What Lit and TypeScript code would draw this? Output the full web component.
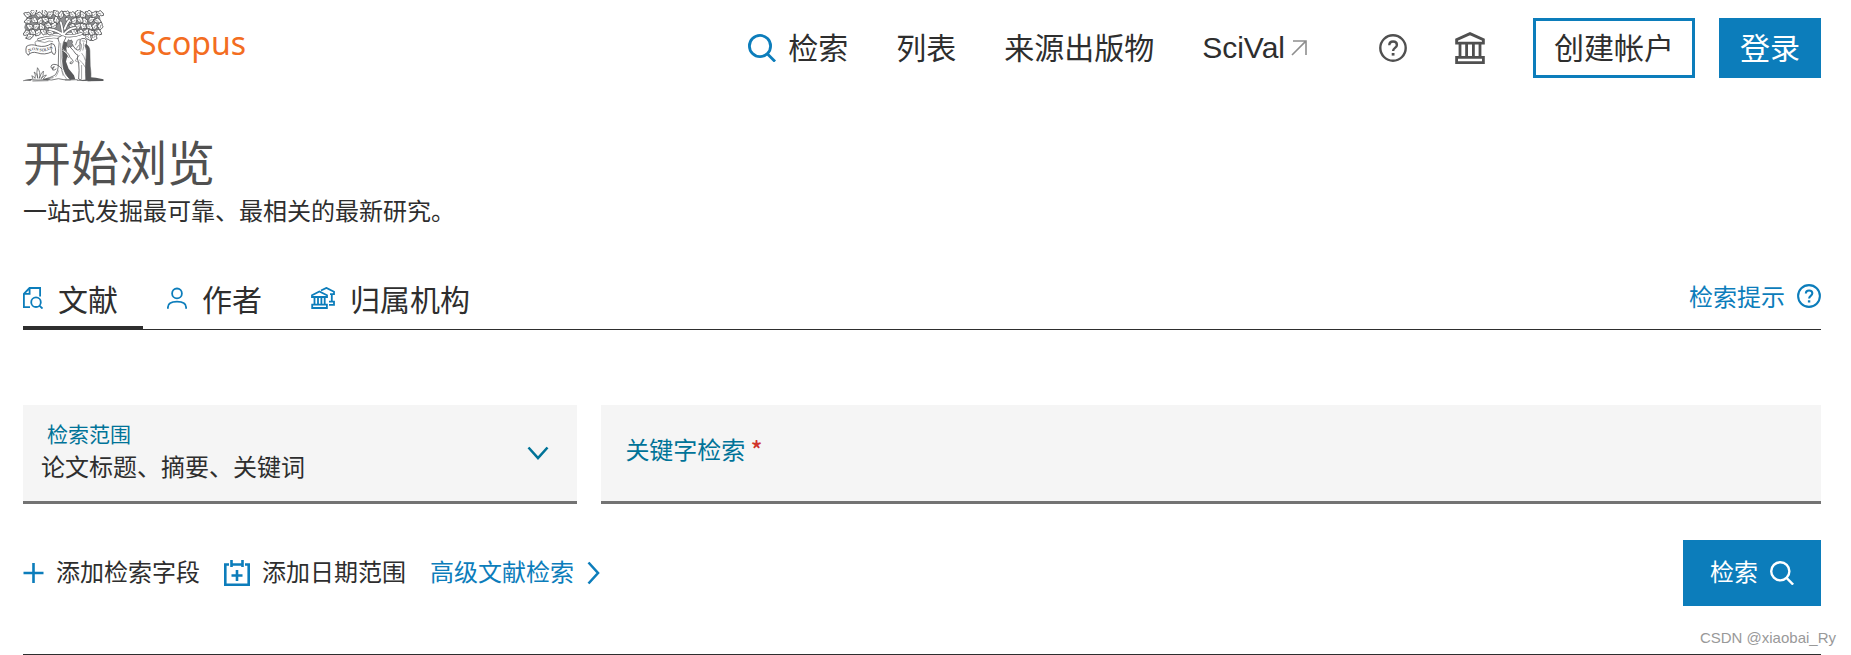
import { LitElement, html, svg, css } from "lit";
import { customElement, state } from "lit/decorators.js";

// x, y, rotation of each leaf in the crown of the emblem
const LEAVES: number[][] = [
  [83, 43, 200], [100, 37, 320], [117, 44, 20], [134, 38, 250], [150, 43, 330], [167, 39, 60],
  [184, 44, 280], [201, 39, 200], [217, 43, 30], [234, 39, 300], [250, 44, 240],
  [267, 39, 20], [284, 43, 310], [300, 40, 20], [84, 61, 160], [102, 60, 30],
  [120, 63, 300], [137, 58, 200], [154, 62, 40], [170, 60, 260], [206, 60, 220],
  [223, 62, 310], [240, 59, 30], [257, 63, 240], [274, 59, 340], [292, 62, 20],
  [90, 79, 210], [108, 80, 330], [126, 80, 240], [144, 76, 20], [162, 77, 300],
  [217, 78, 20], [234, 79, 320], [251, 78, 220], [268, 79, 40], [285, 79, 290], [302, 78, 280],
  [80, 97, 150], [97, 96, 30], [114, 98, 310], [132, 95, 210], [150, 97, 10],
  [224, 95, 210], [242, 96, 20], [259, 96, 310], [276, 97, 220], [294, 96, 30],
  [88, 110, 340], [265, 111, 50], [283, 111, 130],
];

const emblem = html`
  <svg class="emblem" viewBox="69 29 243 217" role="img" aria-label="Elsevier">
    <g fill="none" stroke="#58595b" stroke-linecap="round" stroke-linejoin="round">
      <path fill="#8e8f91" stroke="none" d="M80 42l18-4 30 3 30-3 32 3 32-3 28 3 30-3 20 5 2 16-4 16 4 14-10 16-12 3-28-3-28-8-36 4-26 0-34-6-28 4-22-2-6-16 6-18z"/>
      ${LEAVES.map(([x, y, r]) => svg`
        <g transform="translate(${x} ${y}) rotate(${r})">
          <path fill="#fff" stroke-width="2.6" d="M-11 0q3-5 6-4q0-6 5-5q3 1 4 3q5-1 9 6q-6 6-9 4q-2 5-6 3q-3 0-4-3q-3 0-5-4z"/>
          <path stroke-width="1.6" d="M-5 0L3 0"/>
        </g>`)}
      <g stroke-width="9">
        <path d="M188 118Q190 90 182 66M190 106Q174 90 148 87M192 102Q206 84 226 82M183 112Q150 106 116 118M194 106Q220 110 244 100M194 86Q200 68 208 60"/>
      </g>
      <g stroke="#fff" stroke-width="5.5">
        <path d="M188 118Q190 90 182 66M190 106Q174 90 148 87M192 102Q206 84 226 82M183 112Q150 106 116 118M194 106Q220 110 244 100M194 86Q200 68 208 60"/>
      </g>
      <path fill="#58595b" stroke="none" d="M188 122L203 128 199 146 203 165 198 184 206 206 222 226 226 238 204 240 188 214Z"/>
      <path fill="#fff" stroke-width="2.4" d="M174 114Q180 126 176 145L175 186Q176 214 164 226Q150 234 130 238Q157 243 175 236Q190 240 212 240Q195 225 190 204Q184 170 187 144Q188 126 198 112Q186 100 174 114Z"/>
      <path fill="#fff" stroke="none" d="M177 114Q188 104 196 112L188 120z"/>
      <path stroke-width="1.4" d="M182 130l0 52q1 28 7 44M176 212q-4 12-9 18M186 212q4 14 13 24"/>
      <path stroke-width="2.6" d="M186 207Q178 197 170 194Q160 191 155 195Q150 201 155 205Q163 206 162 199Q155 203 158 210Q164 211 168 207"/>
      <path stroke="#fff" stroke-width="5" d="M190 150Q204 157 208 172"/>
      <path stroke-width="2.4" d="M187 148Q206 155 210 172Q218 177 220 185Q216 195 210 190Q209 184 215 185M187 153Q200 159 205 172"/>

      <path fill="#fff" stroke-width="2.6" d="M80 138Q92 130 112 137Q136 143 154 130Q164 130 166 142Q169 157 164 163Q158 164 155 155Q134 166 111 158Q94 153 84 165Q75 158 77 148Z"/>
      <path stroke-width="1.8" d="M84 165Q92 163 86 153M154 130Q150 142 155 155M108 136Q100 124 111 122L134 127Q148 119 158 124"/>
      <path id="motto" stroke="none" d="M87 156Q100 147 116 153Q136 157 160 144"/>
      <text fill="#58595b" stroke="none" font-family="Liberation Serif, serif" font-weight="700" font-size="13"><textPath href="#motto">NON SOLUS</textPath></text>

      <path fill="#58595b" stroke-width="1.5" d="M255 130Q270 137 270 152L271 198Q275 226 272 240L248 242 256 200Z"/>
      <path fill="#fff" stroke-width="2.6" d="M240 128Q238 117 246 115Q257 112 260 121Q262 130 256 136Q262 148 259 171Q256 196 258 240Q248 244 236 237Q239 210 236 187Q230 177 234 165Q228 165 220 151L207 137L211 130Q219 134 227 147Q234 153 239 148Z"/>
      <path stroke-width="1.6" d="M240 128q6 2 5 10q-1 10-5 16M247 122l8 1M251 128q3 10-2 22M246 160q7 8 10 20M239 180q9 6 19 24M245 196v40M238 166q-8 8-12 16l12 6"/>
      <path fill="#8e8f91" stroke-width="2" d="M202 124l4-6 4 4 4-3 4 6-2 6 4 4-5 5-6-1-4 4-4-7z"/>
      <path stroke-width="2" d="M227 134l5-14 8-3M229 145l7-9"/>

      <path stroke-width="2.2" d="M105 235Q108 224 102 216Q113 220 113 235Q108 216 112 203Q122 215 118 235Q122 219 130 213Q131 228 123 236Q133 224 139 225L130 236M98 236l-3-9 9 6"/>
      <path stroke-width="2.2" d="M70 242l26-3 18 1 34-2M98 243l46-1M140 236l19-3M196 240l36-1M232 241l39 1"/>
      <path fill="#58595b" stroke="none" d="M264 231l24 2 23 5 0 5-48 1zM72 240l25-4-6 6z"/>
    </g>
  </svg>`;

const searchIcon = html`
  <svg class="icon-search" viewBox="0 0 28 28" aria-hidden="true">
    <circle cx="12" cy="12" r="10.6"/><path d="M19 19.5l8 8"/>
  </svg>`;

const helpIcon = html`
  <svg class="icon-help" viewBox="0 0 28 28" aria-hidden="true">
    <circle cx="14" cy="14" r="12.7"/>
    <path d="M10.3 11.2c0-2.2 1.5-3.7 3.8-3.7s3.8 1.4 3.8 3.4c0 3-3.8 3-3.8 6"/>
    <path d="M12.7 19h2.8v2.6h-2.8z" class="solid"/>
  </svg>`;

@customElement("app-root")
export class AppRoot extends LitElement {
  @state() private tab = "文献";

  static styles = css`
    :host {
      display: block;
      position: relative;
      color: #2e2e2e;
      background: #fff;
      font-family: "Noto Sans CJK SC", sans-serif;
      font-size: 24px;
      line-height: 36px;
    }
    * { box-sizing: border-box; }
    a { color: inherit; text-decoration: none; }
    button {
      font: inherit;
      color: inherit;
      background: none;
      border: 0;
      padding: 0;
      cursor: pointer;
    }
    svg { display: block; flex: none; fill: none; stroke: currentColor; }
    .solid { fill: currentColor; stroke: none; }
    .page { padding: 10px 30px 0 23px; }
    .text { padding-bottom: 4px; }

    .header { display: flex; align-items: center; min-height: 76px; font-size: 30px; line-height: 40px; }
    .brand { display: flex; align-items: flex-start; gap: 35px; align-self: flex-start; color: #f36d21; }
    .emblem { width: 81px; height: 72px; }
    .brand-name { font-family: "Noto Sans", sans-serif; font-size: 32px; line-height: 66px; }
    .nav { display: flex; align-items: center; gap: 48px; margin-left: auto; }
    .nav-link { display: flex; align-items: center; gap: 12px; white-space: nowrap; }
    .latin { font-family: "Liberation Sans", sans-serif; gap: 6px; }
    .icon-search { width: 28px; height: 28px; stroke-width: 2.8; color: #0c7dbb; }
    .arrow { width: 16px; height: 16px; stroke-width: 1.6; color: #8e8e8e; }
    .tools { display: flex; align-items: center; gap: 48px; margin-left: 72px; color: #505050; }
    .icon-help { width: 28px; height: 28px; stroke-width: 2.4; }
    .bank { width: 30px; height: 32px; stroke-width: 2.8; }
    .account { display: flex; gap: 24px; margin-left: 48px; }
    .btn { height: 60px; padding: 0 18px 4px; border: 3px solid #0c7dbb; white-space: nowrap; }
    .primary { background: #0c7dbb; color: #fff; }

    .title { margin: 42px 0 0; font-size: 48px; line-height: 64px; font-weight: 400; color: #505050; }
    .lead { margin: 0; }

    .tabs { display: flex; justify-content: space-between; margin-top: 50px; border-bottom: 1px solid #2e2e2e; }
    .tab-list { display: flex; gap: 24px; margin-bottom: -1px; }
    .tab {
      display: flex;
      align-items: center;
      gap: 15px;
      padding: 0 25px 8px 0;
      border-bottom: 4px solid transparent;
      font-size: 30px;
      line-height: 40px;
    }
    .tab.active { border-color: #2e2e2e; }
    .tab-icon { height: 22px; stroke-width: 1.8; color: #0c7dbb; }
    .w20 { width: 20px; }
    .w24 { width: 24px; }
    .hint { display: flex; align-items: center; align-self: flex-start; gap: 12px; color: #0c7dbb; }
    .hint .icon-help { width: 24px; height: 24px; }

    .fields { display: grid; grid-template-columns: 5fr 11fr; gap: 24px; margin-top: 75px; }
    .field { display: flex; height: 99px; background: #f5f5f5; border-bottom: 3px solid #737373; color: #007398; }
    .scope { align-items: center; padding-right: 28px; }
    .stack { display: flex; flex-direction: column; flex: 1; gap: 1px; padding-bottom: 3px; }
    .scope-label { padding-left: 24px; font-size: 21px; line-height: 28px; }
    .select {
      appearance: none;
      width: 100%;
      height: 36px;
      padding: 0 0 0 18px;
      border: 0;
      background: none;
      color: #2e2e2e;
      font: inherit;
    }
    .chevron { width: 22px; height: 14px; stroke-width: 2.6; }
    .keyword { align-items: flex-start; gap: 6px; padding: 26px 24px 0; }
    .keyword-label { white-space: nowrap; }
    .required { color: #d0342c; font-weight: 500; }
    .input { flex: 1; min-width: 0; height: 36px; border: 0; background: none; font: inherit; outline: 0; }

    .actions { display: flex; align-items: center; gap: 24px; margin-top: 36px; }
    .action { display: flex; align-items: center; gap: 12px; white-space: nowrap; }
    .action-icon { height: 26px; color: #0c7dbb; stroke-width: 2.6; }
    .w21 { width: 21px; }
    .w26 { width: 26px; }
    .w14 { width: 14px; }
    .link { color: #0c7dbb; }
    .submit { display: flex; align-items: center; gap: 12px; height: 66px; margin-left: auto; padding: 0 27px; }
    .submit .icon-search { width: 24px; height: 24px; color: #fff; }
    .rule { margin: 48px 0 0; border: 0; border-top: 1px solid #2e2e2e; }
    .mark {
      position: absolute;
      right: 15px;
      bottom: 7px;
      font-family: "Liberation Sans", sans-serif;
      font-size: 15px;
      line-height: 20px;
      color: #999;
    }
  `;

  private tabIcon(name: string) {
    if (name === "文献") {
      return html`<svg class="tab-icon w20" viewBox="0 0 20 22" aria-hidden="true">
        <path d="M7 20.2H.9V6.8L6.5 1h10.6v8.6M6.6 1v5.9H1"/><circle cx="13" cy="15.2" r="4.8"/><path d="M16.4 18.6l3.1 3"/></svg>`;
    }
    if (name === "作者") {
      return html`<svg class="tab-icon w20" viewBox="0 0 20 22" aria-hidden="true">
        <circle cx="10" cy="6.4" r="4.9"/><path d="M.9 21.8v-1.6c0-3.6 3.4-5.6 9.1-5.6s9.1 2 9.1 5.6v1.6"/></svg>`;
    }
    return html`<svg class="tab-icon w24" viewBox="0 0 24 22" aria-hidden="true">
      <path d="M1 10V8.3L8.4 4.5l7.6 3.8V10zM3.5 10v7.6M7 10v7.6M10.4 10v7.6M13.7 10v7.6M1.2 17.6h14.7V21H1.2z"/>
      <path d="M10 3.5l5.4-2.6 7.6 3.8v2.5h-4M20.800 7.2v7.4M18 14.6h5v3.200h-5"/></svg>`;
  }

  render() {
    return html`
      <div class="page">
        <header class="header">
          <a class="brand" href="#">${emblem}<span class="brand-name">Scopus</span></a>
          <nav class="nav">
            <a class="nav-link" href="#">${searchIcon}<span class="text">检索</span></a>
            <a class="nav-link" href="#"><span class="text">列表</span></a>
            <a class="nav-link" href="#"><span class="text">来源出版物</span></a>
            <a class="nav-link latin" href="#">SciVal
              <svg class="arrow" viewBox="0 0 16 16" aria-hidden="true"><path d="M1 15L14.6 1.4M2 1h13v14"/></svg>
            </a>
          </nav>
          <div class="tools">
            <button aria-label="帮助">${helpIcon}</button>
            <button aria-label="机构">
              <svg class="bank" viewBox="0 0 30 32" aria-hidden="true">
                <path d="M1.6 11.2V7.6L15 1.6l13.4 6v3.6zM5 11.2v14M11.6 11.2v14M18.4 11.2v14M25 11.2v14M5 25.4H1.6v5.2h26.8v-5.2H5"/>
              </svg>
            </button>
          </div>
          <div class="account">
            <button class="btn">创建帐户</button>
            <button class="btn primary">登录</button>
          </div>
        </header>

        <main>
          <h1 class="title">开始浏览</h1>
          <p class="lead">一站式发掘最可靠、最相关的最新研究。</p>

          <div class="tabs">
            <div class="tab-list" role="tablist">
              ${["文献", "作者", "归属机构"].map((name) => html`
                <button
                  class="tab ${this.tab === name ? "active" : ""}"
                  role="tab"
                  aria-selected=${this.tab === name}
                  @click=${() => (this.tab = name)}
                >${this.tabIcon(name)}${name}</button>`)}
            </div>
            <a class="hint" href="#">检索提示${helpIcon}</a>
          </div>

          <form @submit=${(e: Event) => e.preventDefault()}>
            <div class="fields">
              <div class="field scope">
                <div class="stack">
                  <label class="scope-label" for="scope">检索范围</label>
                  <select class="select" id="scope"><option>论文标题、摘要、关键词</option></select>
                </div>
                <svg class="chevron" viewBox="0 0 22 14" aria-hidden="true"><path d="M1.5 1.5L11 12l9.5-10.5"/></svg>
              </div>
              <div class="field keyword">
                <label class="keyword-label" for="keyword">关键字检索 <span class="required">*</span></label>
                <input class="input" id="keyword" type="text" />
              </div>
            </div>

            <div class="actions">
              <button class="action" type="button">
                <svg class="action-icon w21" viewBox="0 0 21 26" aria-hidden="true"><path d="M.5 13h20M10.5 3v20"/></svg>
                <span class="text">添加检索字段</span>
              </button>
              <button class="action" type="button">
                <svg class="action-icon w26" viewBox="0 0 26 26" aria-hidden="true">
                  <path d="M5 4.5H1.3v20.2h23.400V4.5H21M7.500 0v7M18.500 0v7M7.500 4.500h11M13 10v11M7.500 15.500h11"/>
                </svg>
                <span class="text">添加日期范围</span>
              </button>
              <a class="action link" href="#"><span class="text">高级文献检索</span>
                <svg class="action-icon w14" viewBox="0 0 14 26" aria-hidden="true"><path d="M2.5 2.5L12 13 2.5 23.5"/></svg>
              </a>
              <button class="submit primary" type="submit"><span class="text">检索</span>${searchIcon}</button>
            </div>
          </form>
        </main>
        <hr class="rule" />
      </div>
      <div class="mark">CSDN @xiaobai_Ry</div>
    `;
  }
}
